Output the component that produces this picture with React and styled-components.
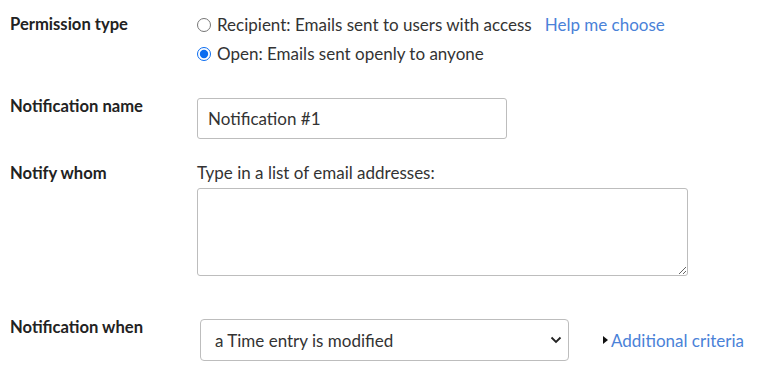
import React, { useState } from 'react'
import styled, { createGlobalStyle } from 'styled-components'

const GlobalStyle = createGlobalStyle`
  body {
    margin: 0;
    background: #fff;
    font-family: Lato, "Open Sans", sans-serif;
    color: #333;
  }
`

const Page = styled.div`
  padding: 10px 0 0 10px;
`

const Row = styled.div`
  display: flex;
  margin-top: ${p => p.gap || 0}px;
`

const Label = styled.div`
  width: 187px;
  flex-shrink: 0;
  padding-top: ${p => p.top || 0}px;
  font-size: 16.6px;
  font-weight: 700;
  line-height: 20px;
  color: #222;
`

const Field = styled.div`
  display: flex;
  flex-direction: column;
  padding-top: ${p => p.top || 0}px;
`

const RadioLine = styled.label`
  display: flex;
  align-items: center;
  height: 29px;
  font-size: 17px;
  cursor: pointer;
`

const Radio = styled.input`
  width: 14px;
  height: 14px;
  margin: 0 6px 0 0;
  accent-color: #0a6cf0;
`

const Link = styled.a`
  color: #4a82d8;
  text-decoration: none;
  margin-left: 13px;
  font-size: 17px;
  cursor: pointer;
`

const TextInput = styled.input`
  box-sizing: border-box;
  width: 310px;
  height: 41px;
  padding: 0 10px;
  border: 1px solid #bdbdbd;
  border-radius: 3px;
  font-family: inherit;
  font-size: 17px;
  color: #333;
  outline: none;
`

const Hint = styled.div`
  font-size: 17px;
  line-height: 20px;
  margin-bottom: 5px;
`

const TextArea = styled.textarea`
  box-sizing: border-box;
  width: 491px;
  height: 88px;
  border: 1px solid #bdbdbd;
  border-radius: 3px;
  font-family: inherit;
  font-size: 17px;
  outline: none;
`

const WhenLine = styled.div`
  display: flex;
  align-items: center;
  margin-left: 3px;
`

const SelectWrap = styled.div`
  position: relative;
  width: 369px;
  height: 42px;
`

const Select = styled.select`
  box-sizing: border-box;
  width: 100%;
  height: 100%;
  appearance: none;
  padding: 0 36px 0 14px;
  border: 1px solid #bdbdbd;
  border-radius: 4px;
  background: #fff;
  font-family: inherit;
  font-size: 17px;
  color: #333;
  outline: none;
`

const Chevron = styled.svg`
  position: absolute;
  right: 6px;
  top: 15px;
  pointer-events: none;
`

const Criteria = styled.div`
  display: flex;
  align-items: center;
  margin-left: 34px;
  color: #4a82d8;
  font-size: 17px;
  cursor: pointer;
`

const Triangle = styled.span`
  width: 0;
  height: 0;
  border-top: 4px solid transparent;
  border-bottom: 4px solid transparent;
  border-left: 5px solid #111;
  margin-right: 3px;
`

export default function App() {
  const [perm, setPerm] = useState('open')
  const [name, setName] = useState('Notification #1')
  const [emails, setEmails] = useState('')
  const [when, setWhen] = useState('modified')

  return <Page>
    <GlobalStyle/>
    <Row>
      <Label top={4}>Permission type</Label>
      <Field>
        <RadioLine>
          <Radio type="radio" name="perm" checked={perm === 'recipient'} onChange={() => setPerm('recipient')}/>
          Recipient: Emails sent to users with access
          <Link>Help me choose</Link>
        </RadioLine>
        <RadioLine>
          <Radio type="radio" name="perm" checked={perm === 'open'} onChange={() => setPerm('open')}/>
          Open: Emails sent openly to anyone
        </RadioLine>
      </Field>
    </Row>
    <Row gap={28}>
      <Label>Notification name</Label>
      <Field top={2}>
        <TextInput value={name} onChange={e => setName(e.target.value)}/>
      </Field>
    </Row>
    <Row gap={24}>
      <Label>Notify whom</Label>
      <Field>
        <Hint>Type in a list of email addresses:</Hint>
        <TextArea value={emails} onChange={e => setEmails(e.target.value)}/>
      </Field>
    </Row>
    <Row gap={41}>
      <Label>Notification when</Label>
      <Field top={2}>
        <WhenLine>
          <SelectWrap>
            <Select value={when} onChange={e => setWhen(e.target.value)}>
              <option value="modified">a Time entry is modified</option>
              <option value="created">a Time entry is created</option>
            </Select>
            <Chevron width="14" height="12" viewBox="0 0 14 12">
              <path d="M2.5 3.5 L7 8 L11.5 3.5" fill="none" stroke="#222" strokeWidth="1.8"/>
            </Chevron>
          </SelectWrap>
          <Criteria><Triangle/>Additional criteria</Criteria>
        </WhenLine>
      </Field>
    </Row>
  </Page>
}
